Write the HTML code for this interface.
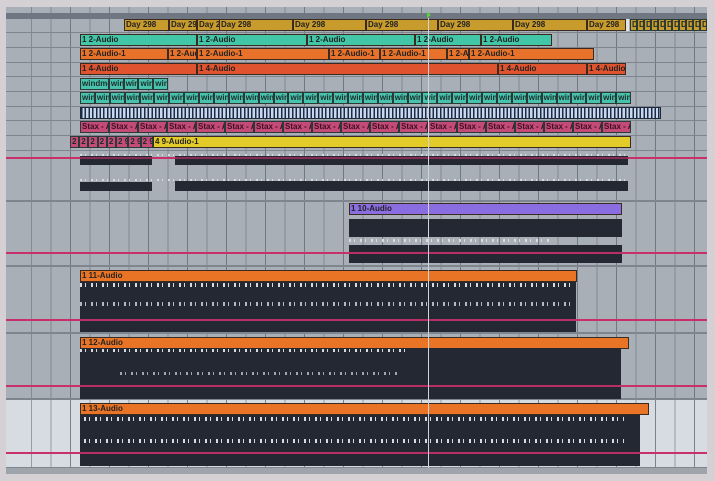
<!DOCTYPE html>
<html><head><meta charset="utf-8"><style>
*{margin:0;padding:0;box-sizing:border-box}
body{width:715px;height:481px;background:#d5d0d3;position:relative;overflow:hidden;font-family:"Liberation Sans",sans-serif}
.p{position:absolute;left:6px;top:7px;width:701px;height:467px;background:#a9afb6;overflow:hidden}
.a{position:absolute}
.grid{position:absolute;left:0;top:0;width:701px;height:467px;background:repeating-linear-gradient(90deg,transparent 0 18.5px,rgba(105,113,123,.6) 18.5px 19.5px);background-position:6.5px 0}
.grid2{position:absolute;left:0;top:0;width:701px;height:467px;background:repeating-linear-gradient(90deg,transparent 0 38px,rgba(95,103,113,.5) 38px 39px);background-position:26px 0}
.hl{position:absolute;left:0;width:701px;height:1px;background:#7e858e}
.c{position:absolute;height:12px;border:1px solid #3a2a20;font-size:8px;font-weight:bold;line-height:10px;padding-left:1px;white-space:nowrap;overflow:hidden;color:#222}
.row{position:absolute;display:flex;height:12px}
.row span{flex:1;border:1px solid #2a3a36;font-size:8px;font-weight:bold;line-height:10px;overflow:hidden;white-space:nowrap;padding-left:1px;color:#1c2c2a}
.dk{position:absolute;background:#242832}
.pk{position:absolute;left:0;width:701px;height:2px;background:#c8306a}
.tk{position:absolute;background:repeating-linear-gradient(90deg,#d8dce2 0 2px,transparent 2px 5px,#d8dce2 5px 6px,transparent 6px 11px)}
</style></head><body>
<div class="p">
<div class="a" style="left:0;top:392px;width:701px;height:68px;background:#d6dce2"></div>
<div class="grid"></div><div class="grid2"></div>
<div class="a" style="left:0;top:6px;width:701px;height:6px;background:#6f7782"></div>
<div class="a" style="left:0;top:460px;width:701px;height:7px;background:#9ea4ab;border-top:1px solid #7e858e"></div>
<div class="hl" style="top:25px"></div><div class="hl" style="top:40px"></div><div class="hl" style="top:55px"></div><div class="hl" style="top:69px"></div><div class="hl" style="top:84px"></div><div class="hl" style="top:99px"></div><div class="hl" style="top:113px"></div><div class="hl" style="top:128px"></div><div class="hl" style="top:143px"></div>
<div class="hl" style="top:193px;height:2px"></div><div class="hl" style="top:258px;height:2px"></div><div class="hl" style="top:325px;height:2px"></div><div class="hl" style="top:391px;height:2px"></div>
<div class="pk" style="top:150px"></div><div class="pk" style="top:245px"></div><div class="pk" style="top:312px"></div><div class="pk" style="top:378px"></div><div class="pk" style="top:445px"></div>
</div>
<div class="c" style="left:124px;top:19px;width:45px;background:#c79b2c">Day 298</div>
<div class="c" style="left:169px;top:19px;width:28px;background:#c79b2c">Day 298</div>
<div class="c" style="left:197px;top:19px;width:23px;background:#c79b2c">Day 298</div>
<div class="c" style="left:219px;top:19px;width:74px;background:#c79b2c">Day 298</div>
<div class="c" style="left:293px;top:19px;width:73px;background:#c79b2c">Day 298</div>
<div class="c" style="left:366px;top:19px;width:72px;background:#c79b2c">Day 298</div>
<div class="c" style="left:438px;top:19px;width:75px;background:#c79b2c">Day 298</div>
<div class="c" style="left:513px;top:19px;width:74px;background:#c79b2c">Day 298</div>
<div class="c" style="left:587px;top:19px;width:39px;background:#c79b2c">Day 298</div>
<div class="a" style="left:626px;top:19px;width:3px;height:12px;background:#e0e4ea"></div>
<div class="row" style="left:630px;top:19px;width:77px"><span style="background:#c79b2c">D</span><span style="background:#c79b2c">D</span><span style="background:#c79b2c">D</span><span style="background:#c79b2c">D</span><span style="background:#c79b2c">D</span><span style="background:#c79b2c">D</span><span style="background:#c79b2c">D</span><span style="background:#c79b2c">D</span><span style="background:#c79b2c">D</span><span style="background:#c79b2c">D</span><span style="background:#c79b2c">D</span></div>
<div class="c" style="left:80px;top:34px;width:117px;background:#41c7a8">1 2-Audio</div>
<div class="c" style="left:197px;top:34px;width:110px;background:#41c7a8">1 2-Audio</div>
<div class="c" style="left:307px;top:34px;width:108px;background:#41c7a8">1 2-Audio</div>
<div class="c" style="left:415px;top:34px;width:66px;background:#41c7a8">1 2-Audio</div>
<div class="c" style="left:481px;top:34px;width:71px;background:#41c7a8">1 2-Audio</div>
<div class="c" style="left:80px;top:48px;width:88px;background:#e8722a">1 2-Audio-1</div>
<div class="c" style="left:168px;top:48px;width:29px;background:#e8722a">1 2-Audio-1</div>
<div class="c" style="left:197px;top:48px;width:132px;background:#e8722a">1 2-Audio-1</div>
<div class="c" style="left:329px;top:48px;width:51px;background:#e8722a">1 2-Audio-1</div>
<div class="c" style="left:380px;top:48px;width:67px;background:#e8722a">1 2-Audio-1</div>
<div class="c" style="left:447px;top:48px;width:22px;background:#e8722a">1 2-Audio-1</div>
<div class="c" style="left:469px;top:48px;width:125px;background:#e8722a">1 2-Audio-1</div>
<div class="c" style="left:80px;top:63px;width:117px;background:#e0532f">1 4-Audio</div>
<div class="c" style="left:197px;top:63px;width:301px;background:#e0532f">1 4-Audio</div>
<div class="c" style="left:498px;top:63px;width:89px;background:#e0532f">1 4-Audio</div>
<div class="c" style="left:587px;top:63px;width:39px;background:#e0532f">1 4-Audio</div>
<div class="row" style="left:80px;top:78px;width:88px"><span style="flex:2.2;background:#48c2ac">windme</span><span style="background:#48c2ac">win</span><span style="background:#48c2ac">win</span><span style="background:#48c2ac">win</span><span style="background:#48c2ac">win</span></div>
<div class="row" style="left:80px;top:92px;width:551px"><span style="background:#48c2ac">win</span><span style="background:#48c2ac">win</span><span style="background:#48c2ac">win</span><span style="background:#48c2ac">win</span><span style="background:#48c2ac">win</span><span style="background:#48c2ac">win</span><span style="background:#48c2ac">win</span><span style="background:#48c2ac">win</span><span style="background:#48c2ac">win</span><span style="background:#48c2ac">win</span><span style="background:#48c2ac">win</span><span style="background:#48c2ac">win</span><span style="background:#48c2ac">win</span><span style="background:#48c2ac">win</span><span style="background:#48c2ac">win</span><span style="background:#48c2ac">win</span><span style="background:#48c2ac">win</span><span style="background:#48c2ac">win</span><span style="background:#48c2ac">win</span><span style="background:#48c2ac">win</span><span style="background:#48c2ac">win</span><span style="background:#48c2ac">win</span><span style="background:#48c2ac">win</span><span style="background:#48c2ac">win</span><span style="background:#48c2ac">win</span><span style="background:#48c2ac">win</span><span style="background:#48c2ac">win</span><span style="background:#48c2ac">win</span><span style="background:#48c2ac">win</span><span style="background:#48c2ac">win</span><span style="background:#48c2ac">win</span><span style="background:#48c2ac">win</span><span style="background:#48c2ac">win</span><span style="background:#48c2ac">win</span><span style="background:#48c2ac">win</span><span style="background:#48c2ac">win</span><span style="background:#48c2ac">win</span></div>
<div class="a" style="left:80px;top:107px;width:581px;height:12px;border:1px solid #1e2a3a;background:repeating-linear-gradient(90deg,#1e2a44 0 1.5px,#c8d8ee 1.5px 3.7px)"></div>
<div class="row" style="left:80px;top:121px;width:551px"><span style="background:#c44a78;color:#3a1020">Stax - A</span><span style="background:#c44a78;color:#3a1020">Stax - A</span><span style="background:#c44a78;color:#3a1020">Stax - A</span><span style="background:#c44a78;color:#3a1020">Stax - A</span><span style="background:#c44a78;color:#3a1020">Stax - A</span><span style="background:#c44a78;color:#3a1020">Stax - A</span><span style="background:#c44a78;color:#3a1020">Stax - A</span><span style="background:#c44a78;color:#3a1020">Stax - A</span><span style="background:#c44a78;color:#3a1020">Stax - A</span><span style="background:#c44a78;color:#3a1020">Stax - A</span><span style="background:#c44a78;color:#3a1020">Stax - A</span><span style="background:#c44a78;color:#3a1020">Stax - A</span><span style="background:#c44a78;color:#3a1020">Stax - A</span><span style="background:#c44a78;color:#3a1020">Stax - A</span><span style="background:#c44a78;color:#3a1020">Stax - A</span><span style="background:#c44a78;color:#3a1020">Stax - A</span><span style="background:#c44a78;color:#3a1020">Stax - A</span><span style="background:#c44a78;color:#3a1020">Stax - A</span><span style="background:#c44a78;color:#3a1020">Stax - A</span></div>
<div class="row" style="left:70px;top:136px;width:83px"><span style="background:#c44a78">2</span><span style="background:#c44a78">2</span><span style="background:#c44a78">2</span><span style="background:#c44a78">2</span><span style="background:#c44a78">2</span><span style="flex:1.5;background:#c44a78">2 9</span><span style="flex:1.5;background:#c44a78">2 9</span><span style="flex:1.5;background:#c44a78">2 9</span></div>
<div class="c" style="left:153px;top:136px;width:478px;background:#e3cb2a">4 9-Audio-1</div>
<div class="dk" style="left:80px;top:156px;width:72px;height:9px"></div>
<div class="dk" style="left:175px;top:156px;width:453px;height:9px"></div>
<div class="dk" style="left:80px;top:182px;width:72px;height:9px"></div>
<div class="dk" style="left:175px;top:181px;width:453px;height:10px"></div>
<div class="tk" style="left:80px;top:154px;width:548px;height:2px"></div>
<div class="tk" style="left:80px;top:179px;width:548px;height:2px"></div>
<div class="c" style="left:349px;top:203px;width:273px;background:#8a6de0">1 10-Audio</div>
<div class="dk" style="left:349px;top:219px;width:273px;height:18px"></div>
<div class="dk" style="left:349px;top:245px;width:273px;height:18px"></div>
<div class="tk" style="left:349px;top:239px;width:200px;height:3px"></div>
<div class="c" style="left:80px;top:270px;width:497px;background:#ea7426">1 11-Audio</div>
<div class="dk" style="left:80px;top:282px;width:496px;height:50px"></div>
<div class="tk" style="left:80px;top:283px;width:490px;height:4px"></div>
<div class="tk" style="left:80px;top:302px;width:490px;height:4px;opacity:.8"></div>
<div class="c" style="left:80px;top:337px;width:549px;background:#ea7426">1 12-Audio</div>
<div class="dk" style="left:80px;top:348px;width:541px;height:51px"></div>
<div class="tk" style="left:80px;top:349px;width:330px;height:3px"></div>
<div class="tk" style="left:120px;top:372px;width:280px;height:3px;opacity:.7"></div>
<div class="c" style="left:80px;top:403px;width:569px;background:#ea7426">1 13-Audio</div>
<div class="dk" style="left:80px;top:415px;width:560px;height:51px"></div>
<div class="tk" style="left:84px;top:417px;width:540px;height:4px"></div>
<div class="tk" style="left:84px;top:439px;width:540px;height:4px"></div>
<div class="pk" style="left:80px;top:452px;width:560px;opacity:.9"></div>
<div class="pk" style="left:349px;top:252px;width:273px;opacity:.9"></div>
<div class="pk" style="left:80px;top:319px;width:496px;opacity:.9"></div>
<div class="pk" style="left:80px;top:385px;width:541px;opacity:.9"></div>
<div class="pk" style="left:80px;top:157px;width:548px;opacity:.6"></div>
<div class="a" style="left:428px;top:18px;width:1px;height:450px;background:#cfd4da"></div>
<div class="a" style="left:427px;top:12px;width:0;height:0;border-left:4px solid #5ad23a;border-top:3px solid transparent;border-bottom:3px solid transparent"></div>
</body></html>
